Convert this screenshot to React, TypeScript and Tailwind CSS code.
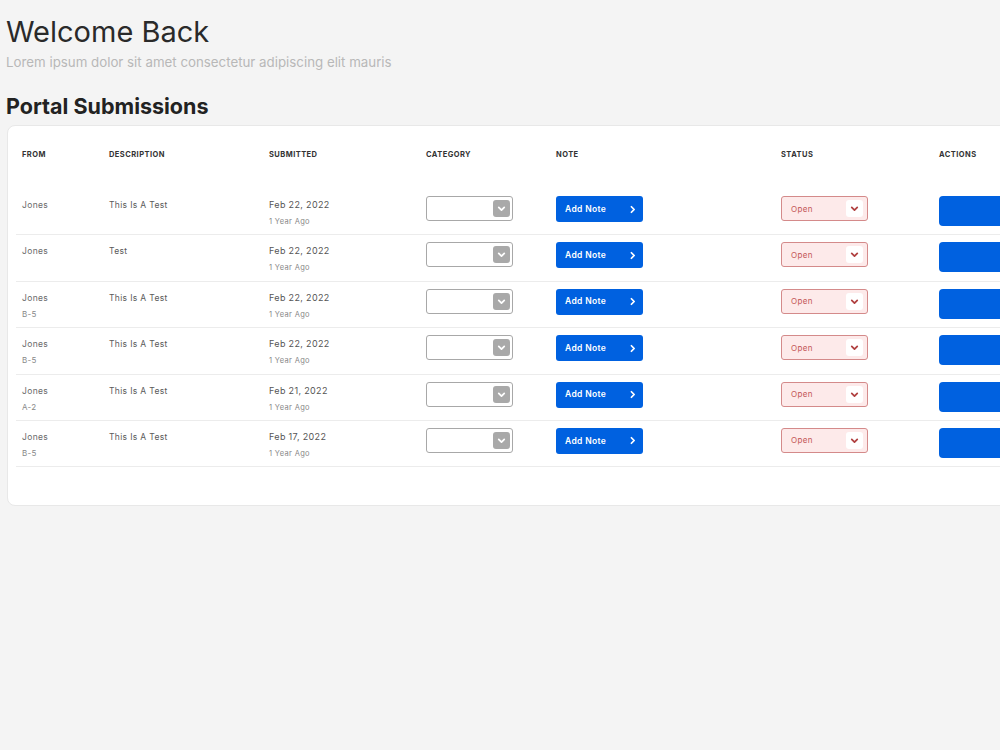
import React from "react";

const rows = [
  { from: "Jones", sub: "", desc: "This Is A Test", date: "Feb 22, 2022" },
  { from: "Jones", sub: "", desc: "Test", date: "Feb 22, 2022" },
  { from: "Jones", sub: "B-5", desc: "This Is A Test", date: "Feb 22, 2022" },
  { from: "Jones", sub: "B-5", desc: "This Is A Test", date: "Feb 22, 2022" },
  { from: "Jones", sub: "A-2", desc: "This Is A Test", date: "Feb 21, 2022" },
  { from: "Jones", sub: "B-5", desc: "This Is A Test", date: "Feb 17, 2022" },
];

const cols = "grid grid-cols-[87px_160px_157px_130px_225px_158px_120px]";

function Chevron({ className }: { className?: string }) {
  return (
    <svg viewBox="0 0 10 10" className={className} fill="none" stroke="currentColor" strokeWidth="1.6" strokeLinecap="round" strokeLinejoin="round">
      <path d="M2.5 4 L5 6.5 L7.5 4" />
    </svg>
  );
}

function ChevronRight({ className }: { className?: string }) {
  return (
    <svg viewBox="0 0 10 10" className={className} fill="none" stroke="currentColor" strokeWidth="1.6" strokeLinecap="round" strokeLinejoin="round">
      <path d="M4 2.5 L6.5 5 L4 7.5" />
    </svg>
  );
}

export default function App() {
  return (
    <div className="min-h-[750px] w-[1000px] overflow-hidden bg-[#f4f4f4] font-['Inter',sans-serif]">
      <div className="pl-[6px] pt-[15px]">
        <h1 className="text-[29px] leading-[34px] font-normal text-[#2a2a2a]">Welcome Back</h1>
        <p className="mt-[4px] text-[13.3px] leading-[18px] text-[#b8b8b8]">Lorem ipsum dolor sit amet consectetur adipiscing elit mauris</p>
        <h2 className="mt-[22px] text-[21.5px] leading-[26px] font-bold text-[#222]">Portal Submissions</h2>
      </div>
      <div className="ml-[7px] mt-[6px] w-[1080px] h-[381px] rounded-[8px] border border-[#e8e8e8] bg-white px-[8px] pt-[20px]">
        <div className={`${cols} h-[18px] items-center text-[7.5px] font-bold tracking-[0.06em] text-[#333]`}>
          <div className="pl-[6px]">FROM</div>
          <div className="pl-[6px]">DESCRIPTION</div>
          <div className="pl-[6px]">SUBMITTED</div>
          <div className="pl-[6px]">CATEGORY</div>
          <div className="pl-[6px]">NOTE</div>
          <div className="pl-[6px]">STATUS</div>
          <div className="pl-[6px]">ACTIONS</div>
        </div>
        <div className="mt-[25px]">
          {rows.map((r, i) => (
            <div key={i} className={`${cols} h-[46.4px] items-start border-b border-[#ececec] pt-[7px] text-[8.5px] tracking-[0.04em]`}>
              <div className="pl-[6px]">
                <div className="leading-[18px] text-[#6a6a6a]">{r.from}</div>
                {r.sub && <div className="leading-[14px] text-[#888] text-[8px]">{r.sub}</div>}
              </div>
              <div className="pl-[6px] leading-[18px] text-[#5a5a5a]">{r.desc}</div>
              <div className="pl-[6px]">
                <div className="leading-[18px] text-[#555] text-[9px]">{r.date}</div>
                <div className="leading-[16px] text-[#888] text-[7.5px]">1 Year Ago</div>
              </div>
              <div className="pl-[6px]">
                <div className="flex h-[25px] w-[87px] items-center justify-end rounded-[3px] border border-[#a8a8a8] bg-white pr-[2px]">
                  <div className="flex h-[17px] w-[17px] items-center justify-center rounded-[3px] bg-[#a9a9a9] text-white">
                    <Chevron className="h-[11px] w-[11px]" />
                  </div>
                </div>
              </div>
              <div className="pl-[6px]">
                <div className="flex h-[26px] w-[87px] items-center justify-between rounded-[3px] bg-[#0061e0] pl-[9px] pr-[5px] text-white">
                  <span className="text-[8.5px] font-semibold tracking-[0.04em]">Add Note</span>
                  <ChevronRight className="h-[11px] w-[11px]" />
                </div>
              </div>
              <div className="pl-[6px]">
                <div className="flex h-[25px] w-[87px] items-center justify-between rounded-[3px] border border-[#d48a8a] bg-[#fdeaea] pl-[9px] pr-[4px]">
                  <span className="text-[8px] text-[#c45656]">Open</span>
                  <div className="flex h-[17px] w-[17px] items-center justify-center rounded-[3px] bg-white text-[#b04040]">
                    <Chevron className="h-[11px] w-[11px]" />
                  </div>
                </div>
              </div>
              <div className="pl-[6px]">
                <div className="h-[30px] w-[110px] rounded-[4px] bg-[#0061e0]" />
              </div>
            </div>
          ))}
        </div>
      </div>
    </div>
  );
}
